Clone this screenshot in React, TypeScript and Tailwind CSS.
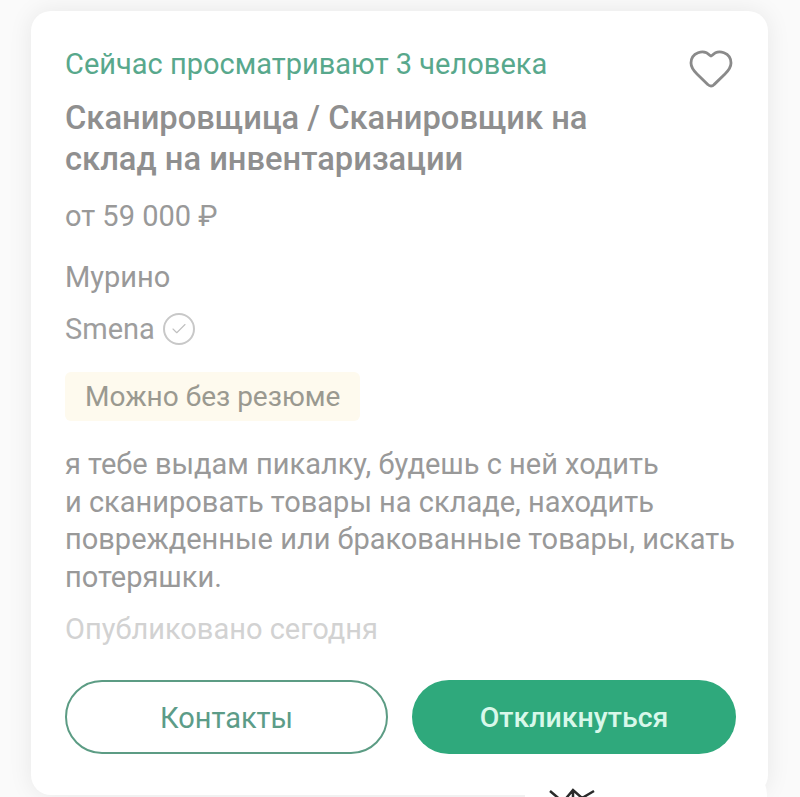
import { Check, Heart } from 'lucide-react';

export default function App() {
  return (
    <div className="relative h-[797px] w-[800px] overflow-hidden bg-[#fafafa] pl-[31px] pt-[11px] font-['Roboto',sans-serif] text-[#999999]">
      <div className="h-[784px] w-[737px] rounded-[20px] bg-white px-[34px] pt-[35px] shadow-[0_0_24px_rgba(0,0,0,0.08)]">
        <div className="flex items-start justify-between">
          <p className="text-[29px] leading-[36px] text-[#58a88c]">Сейчас просматривают 3 человека</p>
          <Heart className="-mr-[1px] -mt-[2px] h-[48px] w-[48px] text-[#8a8a8a]" strokeWidth={1.4} />
        </div>
        <h1 className="mt-[6px] w-[560px] text-[32.7px] font-medium leading-[41px] text-[#8f8f8f]">
          Сканировщица / Сканировщик на склад на инвентаризации
        </h1>
        <p className="mt-[18px] text-[29px] leading-[36px]">от 59 000 ₽</p>
        <p className="mt-[25px] text-[29px] leading-[36px]">Мурино</p>
        <div className="mt-[16px] flex items-center gap-[8px]">
          <span className="text-[29px] leading-[36px] text-[#9e9e9e]">Smena</span>
          <span className="flex h-[32px] w-[32px] items-center justify-center rounded-full border-2 border-[#c8c8c8]">
            <Check className="h-[18px] w-[18px] text-[#c0c0c0]" strokeWidth={1.5} />
          </span>
        </div>
        <div className="mt-[25px] inline-block h-[49px] rounded-[6px] bg-[#fefaee] px-[20px] text-[28px] leading-[49px] text-[#9a9990]">
          Можно без резюме
        </div>
        <p className="mt-[25px] w-[680px] text-[29px] leading-[37.5px]">
          я тебе выдам пикалку, будешь с ней ходить
          <br />и сканировать товары на складе, находить
          <br />поврежденные или бракованные товары, искать
          <br />потеряшки.
        </p>
        <p className="mt-[15px] text-[29px] leading-[36px] text-[#d2d2d2]">Опубликовано сегодня</p>
        <div className="mt-[33px] flex gap-[24px]">
          <button className="h-[74px] w-[323px] shrink-0 rounded-full border-2 border-[#5c9c84] pt-[3px] text-[29px] text-[#5c9c88]">
            Контакты
          </button>
          <button className="h-[74px] w-[324px] shrink-0 rounded-full bg-[#2fa97c] pt-[3px] text-[28.5px] font-medium text-[#d8f8ea]">
            Откликнуться
          </button>
        </div>
      </div>
      <div className="absolute left-[525px] top-[765px] h-[80px] w-[242px] rounded-t-[30px] bg-white pl-[24px] pt-[23px]">
        <svg className="h-[24px] w-[46px]" viewBox="0 0 46 24" fill="none" stroke="#2a2a2a" strokeWidth="2.5">
          <path d="M1 3 L14 14 L24 2 L33 10 L45 3 M24 2 V14 M14 14 V24 M33 10 V24" />
        </svg>
      </div>
    </div>
  );
}
